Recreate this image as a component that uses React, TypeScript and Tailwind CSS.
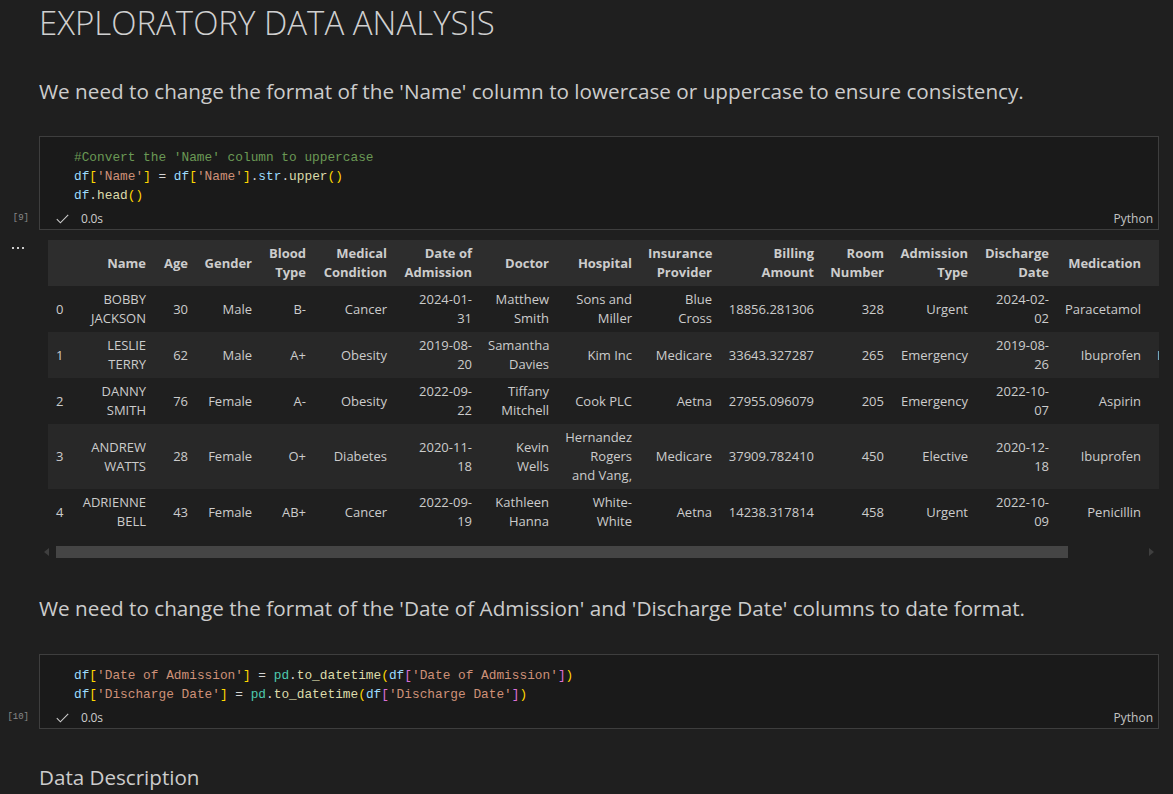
import React from "react";

type Seg = [string, string];

const C = {
  var: "text-[#9cdcfe]",
  b1: "text-[#ffd700]",
  b2: "text-[#da70d6]",
  str: "text-[#ce9178]",
  op: "text-[#d4d4d4]",
  fn: "text-[#dcdcaa]",
  mod: "text-[#4ec9b0]",
  com: "text-[#6a9955]",
};

const cell1: Seg[][] = [
  [[C.com, "#Convert the 'Name' column to uppercase"]],
  [
    [C.var, "df"],
    [C.b1, "["],
    [C.str, "'Name'"],
    [C.b1, "]"],
    [C.op, " = "],
    [C.var, "df"],
    [C.b1, "["],
    [C.str, "'Name'"],
    [C.b1, "]"],
    [C.op, "."],
    [C.var, "str"],
    [C.op, "."],
    [C.fn, "upper"],
    [C.b1, "()"],
  ],
  [
    [C.var, "df"],
    [C.op, "."],
    [C.fn, "head"],
    [C.b1, "()"],
  ],
];

const cell2: Seg[][] = [
  [
    [C.var, "df"],
    [C.b1, "["],
    [C.str, "'Date of Admission'"],
    [C.b1, "]"],
    [C.op, " = "],
    [C.mod, "pd"],
    [C.op, "."],
    [C.fn, "to_datetime"],
    [C.b1, "("],
    [C.var, "df"],
    [C.b2, "["],
    [C.str, "'Date of Admission'"],
    [C.b2, "]"],
    [C.b1, ")"],
  ],
  [
    [C.var, "df"],
    [C.b1, "["],
    [C.str, "'Discharge Date'"],
    [C.b1, "]"],
    [C.op, " = "],
    [C.mod, "pd"],
    [C.op, "."],
    [C.fn, "to_datetime"],
    [C.b1, "("],
    [C.var, "df"],
    [C.b2, "["],
    [C.str, "'Discharge Date'"],
    [C.b2, "]"],
    [C.b1, ")"],
  ],
];

const colWidths = [
  "w-[24px]",
  "w-[82px]",
  "w-[42px]",
  "w-[64px]",
  "w-[54px]",
  "w-[81px]",
  "w-[85px]",
  "w-[77px]",
  "w-[83px]",
  "w-[80px]",
  "w-[102px]",
  "w-[70px]",
  "w-[84px]",
  "w-[81px]",
  "w-[92px]",
  "w-[88px]",
];

const headers: string[][] = [
  [""],
  ["Name"],
  ["Age"],
  ["Gender"],
  ["Blood", "Type"],
  ["Medical", "Condition"],
  ["Date of", "Admission"],
  ["Doctor"],
  ["Hospital"],
  ["Insurance", "Provider"],
  ["Billing", "Amount"],
  ["Room", "Number"],
  ["Admission", "Type"],
  ["Discharge", "Date"],
  ["Medication"],
  ["Test", "Results"],
];

const rows: string[][][] = [
  [
    ["0"],
    ["BOBBY", "JACKSON"],
    ["30"],
    ["Male"],
    ["B-"],
    ["Cancer"],
    ["2024-01-", "31"],
    ["Matthew", "Smith"],
    ["Sons and", "Miller"],
    ["Blue", "Cross"],
    ["18856.281306"],
    ["328"],
    ["Urgent"],
    ["2024-02-", "02"],
    ["Paracetamol"],
    ["Normal"],
  ],
  [
    ["1"],
    ["LESLIE", "TERRY"],
    ["62"],
    ["Male"],
    ["A+"],
    ["Obesity"],
    ["2019-08-", "20"],
    ["Samantha", "Davies"],
    ["Kim Inc"],
    ["Medicare"],
    ["33643.327287"],
    ["265"],
    ["Emergency"],
    ["2019-08-", "26"],
    ["Ibuprofen"],
    ["Inconclusive"],
  ],
  [
    ["2"],
    ["DANNY", "SMITH"],
    ["76"],
    ["Female"],
    ["A-"],
    ["Obesity"],
    ["2022-09-", "22"],
    ["Tiffany", "Mitchell"],
    ["Cook PLC"],
    ["Aetna"],
    ["27955.096079"],
    ["205"],
    ["Emergency"],
    ["2022-10-", "07"],
    ["Aspirin"],
    ["Normal"],
  ],
  [
    ["3"],
    ["ANDREW", "WATTS"],
    ["28"],
    ["Female"],
    ["O+"],
    ["Diabetes"],
    ["2020-11-", "18"],
    ["Kevin", "Wells"],
    ["Hernandez", "Rogers", "and Vang,"],
    ["Medicare"],
    ["37909.782410"],
    ["450"],
    ["Elective"],
    ["2020-12-", "18"],
    ["Ibuprofen"],
    ["Abnormal"],
  ],
  [
    ["4"],
    ["ADRIENNE", "BELL"],
    ["43"],
    ["Female"],
    ["AB+"],
    ["Cancer"],
    ["2022-09-", "19"],
    ["Kathleen", "Hanna"],
    ["White-", "White"],
    ["Aetna"],
    ["14238.317814"],
    ["458"],
    ["Urgent"],
    ["2022-10-", "09"],
    ["Penicillin"],
    ["Abnormal"],
  ],
];

function Lines({ lines }: { lines: string[] }) {
  return (
    <>
      {lines.map((l, i) => (
        <div key={i} className="whitespace-nowrap">
          {l}
        </div>
      ))}
    </>
  );
}

function CodeCell({ label, code }: { label: string; code: Seg[][] }) {
  return (
    <div className="flex">
      <div className="w-[39px] shrink-0 flex flex-col justify-end pb-[1px]">
        <div className="h-[20px] flex items-center justify-end pr-[10px] font-['Liberation_Mono',monospace] text-[9px] text-[#8a8a8a]">
          {label}
        </div>
      </div>
      <div className="flex-1 border border-[#3e3e3e] bg-[#1a1a1a]">
        <pre className="pt-[11px] pl-[34px] font-['Liberation_Mono',monospace] text-[12.8px] leading-[19px] text-[#d4d4d4]">
          {code.map((line, i) => (
            <div key={i} className="h-[19px] whitespace-pre">
              {line.map(([cls, t], j) => (
                <span key={j} className={cls}>
                  {t}
                </span>
              ))}
            </div>
          ))}
        </pre>
        <div className="mt-[4px] h-[20px] flex items-center pl-[16px] pr-[5px] text-[12px] text-[#cccccc]">
          <svg width="13" height="10" viewBox="0 0 13 10" className="shrink-0">
            <polyline
              points="0.8,5.2 4.4,8.8 12.2,0.8"
              fill="none"
              stroke="#cccccc"
              strokeWidth="1.1"
            />
          </svg>
          <span className="ml-[12px] tracking-[-0.2px]">0.0s</span>
          <span className="ml-auto text-[#c4c4c4]">Python</span>
        </div>
      </div>
    </div>
  );
}

function DataTable() {
  return (
    <div className="ml-[9px] overflow-hidden">
      <table className="table-fixed border-collapse w-[1189px] text-[13px] leading-[19px] text-[#cccccc]">
        <colgroup>
          {colWidths.map((w, i) => (
            <col key={i} className={w} />
          ))}
        </colgroup>
        <thead>
          <tr className="bg-[#2d2d2d]">
            {headers.map((h, i) => (
              <th
                key={i}
                className="px-[8px] py-[4px] text-right align-middle font-bold"
              >
                <Lines lines={h} />
              </th>
            ))}
          </tr>
        </thead>
        <tbody>
          {rows.map((r, ri) => (
            <tr key={ri} className={ri % 2 === 1 ? "bg-[#282828]" : "bg-[#1f1f1f]"}>
              {r.map((c, ci) => (
                <td
                  key={ci}
                  className={
                    ci === 0
                      ? "px-[8px] py-[4px] text-left align-middle"
                      : "px-[8px] py-[4px] text-right align-middle"
                  }
                >
                  <Lines lines={c} />
                </td>
              ))}
            </tr>
          ))}
        </tbody>
      </table>
    </div>
  );
}

function Scrollbar() {
  return (
    <div className="mt-[11px] h-[12px] flex items-center">
      <div className="w-[49px] shrink-0 flex justify-end">
        <svg width="5" height="8" viewBox="0 0 5 8">
          <polygon points="5,0 5,8 0,4" fill="#3f3f3f" />
        </svg>
      </div>
      <div className="ml-[7px] w-[1012px] h-[12px] bg-[#454545]" />
      <div className="ml-[81px]">
        <svg width="5" height="8" viewBox="0 0 5 8">
          <polygon points="0,0 0,8 5,4" fill="#3f3f3f" />
        </svg>
      </div>
    </div>
  );
}

export default function App() {
  return (
    <div className="w-[1173px] h-[794px] overflow-hidden bg-[#1f1f1f] text-[#cccccc] font-['Open_Sans',sans-serif] pr-[14px]">
      <div className="pl-[39px]">
        <h1 className="text-[33px] leading-[46px] font-light text-[#d0d0d0] whitespace-nowrap">
          EXPLORATORY DATA ANALYSIS
        </h1>
        <p className="mt-[31px] text-[20.7px] leading-[28px] whitespace-nowrap">
          We need to change the format of the 'Name' column to lowercase or uppercase to
          ensure consistency.
        </p>
      </div>

      <div className="mt-[31px]">
        <CodeCell label="[9]" code={cell1} />
      </div>

      <div className="mt-[10px] flex">
        <div className="w-[39px] shrink-0 flex pl-[12px] pt-[7px] gap-[3px]">
          <div className="w-[2px] h-[2px] bg-[#cccccc]" />
          <div className="w-[2px] h-[2px] bg-[#cccccc]" />
          <div className="w-[2px] h-[2px] bg-[#cccccc]" />
        </div>
        <div className="flex-1 min-w-0">
          <DataTable />
        </div>
      </div>
      <Scrollbar />

      <div className="pl-[39px]">
        <p className="mt-[36px] text-[20.7px] leading-[28px] whitespace-nowrap">
          We need to change the format of the 'Date of Admission' and 'Discharge Date'
          columns to date format.
        </p>
      </div>

      <div className="mt-[32px]">
        <CodeCell label="[10]" code={cell2} />
      </div>

      <div className="pl-[39px]">
        <h2 className="mt-[34px] text-[20.6px] leading-[28px]">Data Description</h2>
      </div>
    </div>
  );
}
